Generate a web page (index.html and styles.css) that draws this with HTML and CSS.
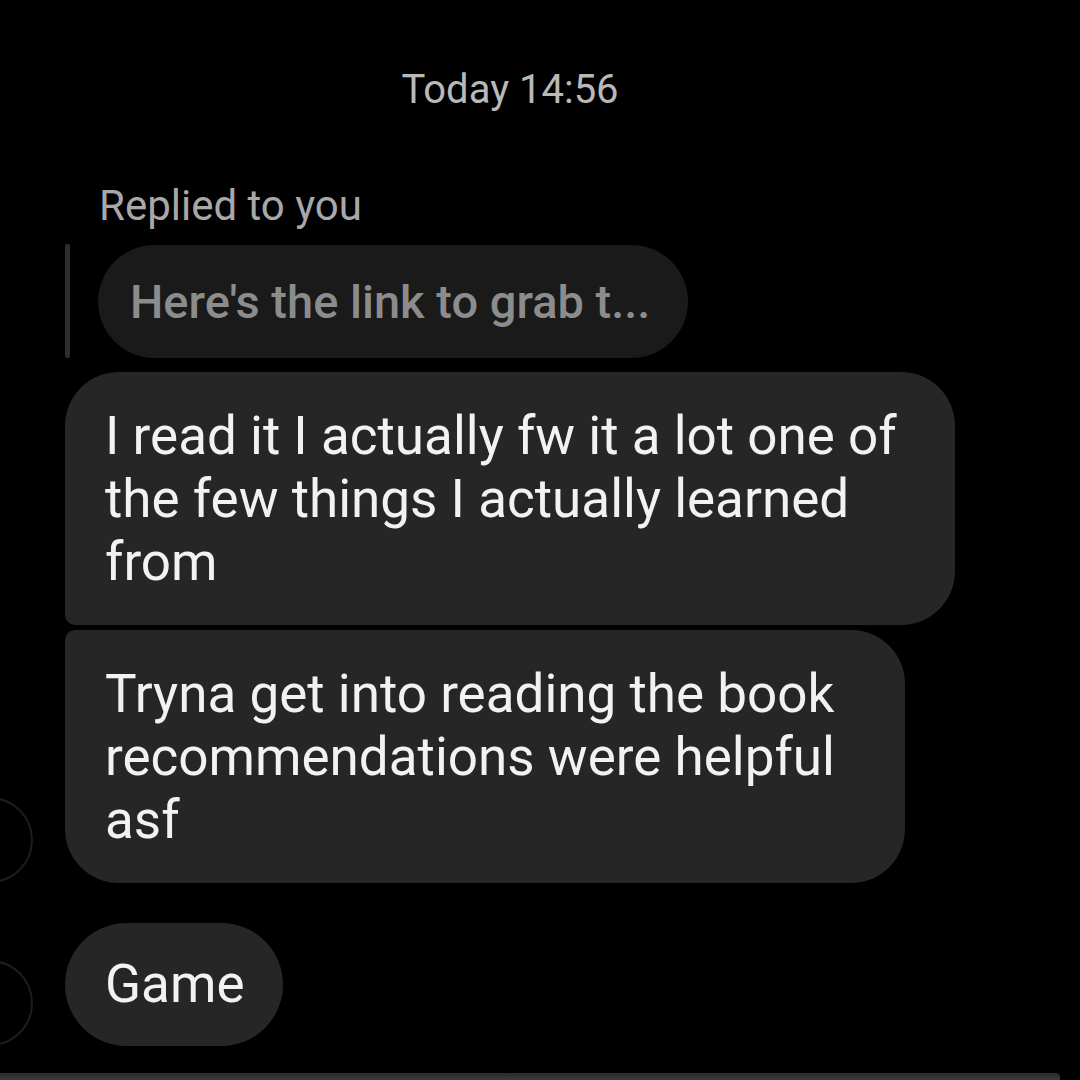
FILE: index.html
```html
<!DOCTYPE html>
<html>
<head>
<meta charset="utf-8">
<link rel="stylesheet" href="styles.css">
</head>
<body>
<div class="screen">
  <div class="stamp">Today 14:56</div>
  <div class="reply-label">Replied to you</div>
  <div class="quote">
    <div class="quote-bar"></div>
    <div class="quote-bubble">Here's the link to grab t...</div>
  </div>
  <div class="row">
    <div class="avatar-space"></div>
    <div class="bubble b-first">I read it I actually fw it a lot one of the few things I actually learned from</div>
  </div>
  <div class="row row-tight">
    <div class="avatar"></div>
    <div class="bubble b-last b-two">Tryna get into reading the book recommendations were helpful asf</div>
  </div>
  <div class="row row-gap">
    <div class="avatar"></div>
    <div class="bubble b-single">Game</div>
  </div>
  <div class="composer-edge"></div>
</div>
</body>
</html>
```

FILE: styles.css
```css
html, body {
  margin: 0;
  padding: 0;
  background: #000;
}
.screen {
  width: 1080px;
  height: 1080px;
  overflow: hidden;
  display: flex;
  flex-direction: column;
  font-family: Roboto, "Noto Sans", Arial, sans-serif;
}
.stamp {
  margin-top: 66px;
  text-align: center;
  padding-right: 60px;
  color: #b9b9b9;
  font-size: 40px;
  line-height: 48px;
}
.reply-label {
  margin-top: 68px;
  margin-left: 99px;
  color: #a8a8a8;
  font-size: 42px;
  line-height: 48px;
}
.quote {
  display: flex;
  align-items: center;
  margin-top: 14px;
  margin-left: 65px;
  gap: 28px;
}
.quote-bar {
  width: 5px;
  height: 114px;
  background: #2e2e2e;
  border-radius: 2px;
}
.quote-bubble {
  height: 113px;
  box-sizing: border-box;
  padding: 0 38px 0 32px;
  display: flex;
  align-items: center;
  background: #1a1a1a;
  border-radius: 57px;
  color: #8c8c8c;
  font-size: 47px;
  font-weight: 500;
}
.row {
  display: flex;
  align-items: flex-end;
  margin-left: -53px;
  gap: 32px;
  margin-top: 14px;
}
.row-tight { margin-top: 5px; }
.row-gap { margin-top: 40px; }
.avatar-space {
  width: 86px;
  flex: none;
}
.avatar {
  width: 86px;
  height: 86px;
  flex: none;
  box-sizing: border-box;
  border: 2px solid #1d1d1d;
  border-radius: 50%;
}
.bubble {
  background: #262626;
  color: #f2f2f2;
  font-size: 53px;
  line-height: 63px;
  padding: 33px 30px 31px 40px;
  box-sizing: border-box;
}
.b-first {
  width: 890px;
  border-radius: 54px 54px 54px 10px;
}
.b-two {
  width: 840px;
}
.b-last {
  border-radius: 10px 54px 54px 54px;
}
.b-single {
  height: 123px;
  display: flex;
  align-items: center;
  padding: 0 38px 0 40px;
  border-radius: 62px;
}
.composer-edge {
  margin-top: 27px;
  height: 7px;
  width: 1060px;
  background: linear-gradient(#2a2a2a, #3a3a3a);
  border-radius: 0 4px 0 0;
}
```
